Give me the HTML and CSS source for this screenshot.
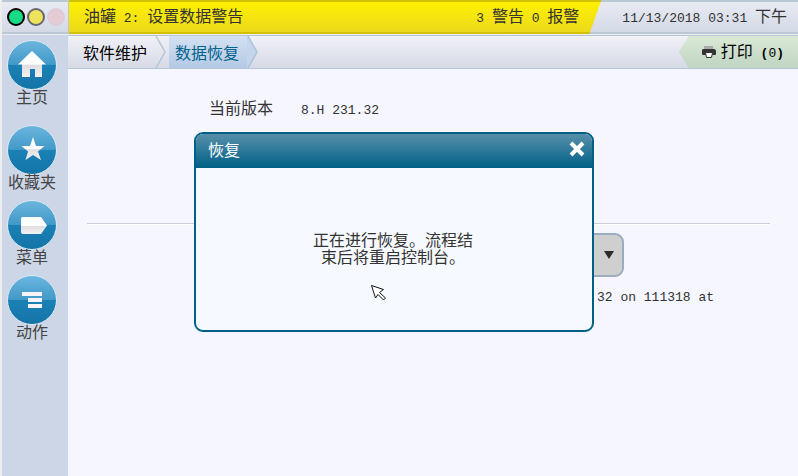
FILE: index.html
```
<!DOCTYPE html>
<html lang="zh-CN">

<head>
  <meta charset="utf-8">
  <title>数据恢复</title>
  <link rel="stylesheet" href="styles.css">
</head>

<body>
  <header class="topbar">
    <div class="lamps">
      <span class="lamp green"></span>
      <span class="lamp yellow"></span>
      <span class="lamp red"></span>
    </div>
    <div class="alert">
      <span>油罐<span class="num"> 2: </span>设置数据警告</span>
      <span><span class="num">3 </span>警告<span class="num"> 0 </span>报警</span>
    </div>
    <div class="clock"><span><span class="num">11/13/2018 03:31 </span>下午</span></div>
  </header>

  <div class="page">
    <nav class="sidebar">
      <a class="navitem home" href="#">
        <span class="disc">
          <svg width="48" height="48" viewBox="0 0 48 48">
            <defs>
              <linearGradient id="shine" x1="0" y1="0" x2="0" y2="1">
                <stop offset="0" stop-color="#fff" />
                <stop offset="0.5" stop-color="#fff" />
                <stop offset="0.55" stop-color="#e2dfe3" />
                <stop offset="1" stop-color="#f4f1f4" />
              </linearGradient>
            </defs>
            <path fill="url(#shine)" d="M24 10L38 23.500H34V36H27V28H22V36H14V23.500H10Z" />
          </svg>
        </span>
        主页
      </a>
      <a class="navitem" href="#">
        <span class="disc">
          <svg width="48" height="48" viewBox="0 0 48 48">
            <path fill="url(#shine)" d="M25 11L28 20H36.500L30 25.500L33 34L25 29L17.500 34L20 25.500L13.500 20H22Z" />
          </svg>
        </span>
        收藏夹
      </a>
      <a class="navitem" href="#">
        <span class="disc">
          <svg width="48" height="48" viewBox="0 0 48 48">
            <path fill="url(#shine)" d="M15 16H33L39 24.500L33 33H15Q13 33 13 31V18Q13 16 15 16Z" />
          </svg>
        </span>
        菜单
      </a>
      <a class="navitem" href="#">
        <span class="disc">
          <svg width="48" height="48" viewBox="0 0 48 48">
            <path fill="#f6f4f7" d="M14 16H34V20H14ZM20 22H34V26H20ZM20 28H34V32H20Z" />
          </svg>
        </span>
        动作
      </a>
    </nav>

    <div class="content">
      <div class="crumbs">
        <a class="crumb" href="#">软件维护</a>
        <svg class="chevron" width="14" height="32" viewBox="0 0 14 32">
          <path fill="none" stroke="#b5c6d6" stroke-width="1.500" d="M1 0L10 16L1 32" />
        </svg>
        <a class="crumb current" href="#">数据恢复</a>
        <svg class="chevron" width="12" height="32" viewBox="0 0 12 32">
          <path fill="#c4d5ec" d="M0 0H1L10 16L1 32H0Z" />
          <path fill="none" stroke="#a9c4da" stroke-width="1.500" d="M1 0L10 16L1 32" />
        </svg>
        <button class="print" type="button">
          <svg width="16" height="14" viewBox="0 0 16 14">
            <path fill="#aaa" d="M3 1H12V5H3Z" />
            <path fill="#333" d="M2 4H13Q15 4 15 6V9Q15 10 14 10H2Q1 10 1 9V6Q1 4 2 4Z" />
            <path fill="#fff" stroke="#333" d="M4.500 7.500H11.500L10.500 12.500H5.500Z" />
          </svg>
          <span>打印<span class="num bold"> (</span><span class="num">0</span><span class="num bold">)</span></span>
        </button>
      </div>

      <main class="main">
        <div class="version">
          <span>当前版本</span>
          <span class="num">8.H 231.32</span>
        </div>
        <hr class="rule">
        <div class="picker">
          <select class="select" aria-label="数据恢复">
            <option></option>
          </select>
          <svg class="arrow" width="10" height="8" viewBox="0 0 10 8">
            <path fill="#2b2b2b" d="M0 0H10L5 8Z" />
          </svg>
        </div>
        <p class="detail num">32 on 111318 at</p>
      </main>
    </div>
  </div>

  <div class="dialog" role="dialog" aria-labelledby="dialog-title">
    <div class="dialog-head">
      <span id="dialog-title">恢复</span>
      <button class="close" type="button" aria-label="关闭">
        <svg width="16" height="16" viewBox="0 0 16 16">
          <path stroke="#fff" stroke-width="4" d="M2 2L14 14M14 2L2 14" />
        </svg>
      </button>
    </div>
    <p class="dialog-text">正在进行恢复。流程结束后将重启控制台。</p>
  </div>

  <svg class="pointer" width="16" height="16" viewBox="0 0 16 16">
    <path fill="#fff" stroke="#111" d="M0.500 0.500L12.500 4.500L8.500 7.500L14.500 13L12.500 15L7 9.500L4.500 13Z" />
  </svg>
</body>

</html>
```

FILE: styles.css
```
* {
  box-sizing: border-box;
}

body {
  margin: 0;
  min-height: 100vh;
  display: flex;
  flex-direction: column;
  padding-left: 2px;
  background: #eee;
  color: #333;
  font-family: "Noto Sans CJK SC", sans-serif;
  font-size: 16px;
  font-weight: 400;
  line-height: 16px;
}

a {
  color: inherit;
  text-decoration: none;
}

button {
  border: 0;
  padding: 0;
  background: none;
  color: inherit;
  font: inherit;
}

svg {
  display: block;
  flex: none;
}

/* latin and digits are half the width of a chinese character */
.num {
  font-family: "Liberation Mono", monospace;
  font-size: 13px;
  font-weight: 400;
  white-space: pre;
}

.bold {
  font-weight: 700;
}

/* top bar */
.topbar {
  display: flex;
  height: 34px;
  background: linear-gradient(#e9ebf3, #d3d9e6);
  border-top: 2px solid #bac7d5;
  border-bottom: 2px solid #bac7d5;
}

.lamps {
  width: 67px;
  display: flex;
  align-items: center;
  gap: 2px;
  padding-left: 5px;
  border-right: 1px solid #bac7d5;
}

.lamp {
  width: 18px;
  height: 18px;
  border: 2px solid #000;
  border-radius: 50%;
}

.green {
  background: #18dc85;
}

.yellow {
  background: #ede35c;
  border-color: #68686c;
}

.red {
  background: #e4cbd4;
  border-color: #dcccd6;
}

.alert {
  flex: 1;
  display: flex;
  align-items: center;
  justify-content: space-between;
  margin: -2px 0;
  padding: 0 22px 0 15px;
  background: linear-gradient(#fff000, #ecd91d);
  border-top: 2px solid #d3c203;
  border-bottom: 2px solid #d3c203;
  clip-path: polygon(0 0, 100% 0, calc(100% - 12px) 100%, 0 100%);
}

.clock {
  display: flex;
  align-items: center;
  padding: 0 11px 0 21px;
}

/* sidebar */
.page {
  flex: 1;
  display: flex;
  padding-top: 1px;
}

.sidebar {
  width: 66px;
  padding: 5px 0;
  background: #ccd6e6;
}

.navitem {
  display: flex;
  flex-direction: column;
  align-items: center;
  margin-bottom: 11px;
  padding-right: 6px;
  color: #444;
}

.home {
  margin-bottom: 21px;
}

.disc {
  width: 50px;
  height: 50px;
  margin-bottom: -2px;
  border: 1px solid #dbe9f3;
  border-radius: 50%;
  background: linear-gradient(#6bb6df, #4198c7 50%, #1b81b5 50%, #1474a8);
}

/* breadcrumbs */
.content {
  flex: 1;
  background: #f5f6ff;
}

.crumbs {
  display: flex;
  height: 34px;
  background: linear-gradient(#f1f1f7, #d6dae6);
  border-top: 1px solid #b5c6d6;
  border-bottom: 1px solid #b5c6d6;
}

.crumb {
  display: flex;
  align-items: center;
  padding: 0 8px 1px 15px;
  color: #000;
}

.current {
  padding: 0 8px 1px 6px;
  background: linear-gradient(#d3e0f1, #b4c9e6);
  color: #00628c;
}

.print {
  display: flex;
  align-items: center;
  gap: 4px;
  margin-left: auto;
  padding: 0 14px 0 22px;
  background: linear-gradient(#dae9d6, #bfd5c2);
  color: #000;
  clip-path: polygon(10px 0, 100% 0, 100% 100%, 10px 100%, 0 50%);
}

/* main area */
.main {
  padding: 30px 28px 0 19px;
}

.version {
  display: flex;
  align-items: baseline;
  gap: 28px;
  padding-left: 122px;
}

.rule {
  margin: 104px 0 8px;
  border: 0;
  border-top: 1px solid #cccddd;
  border-bottom: 1px solid #fff;
}

.picker {
  position: relative;
  width: 324px;
  margin-left: 213px;
}

.select {
  display: block;
  appearance: none;
  width: 100%;
  height: 44px;
  border: 2px solid #9aacbf;
  border-radius: 9px;
  background: #cfcfcf;
}

.arrow {
  position: absolute;
  right: 10px;
  top: 18px;
  pointer-events: none;
}

.detail {
  margin: 13px 0 0 510px;
}

/* dialog */
.dialog {
  position: absolute;
  left: 194px;
  top: 132px;
  width: 400px;
  height: 200px;
  overflow: hidden;
  border: 2px solid #005f87;
  border-radius: 9px;
  background: #f6f9ff;
}

.dialog-head {
  display: flex;
  align-items: center;
  justify-content: space-between;
  height: 34px;
  padding: 0 7px 4px 12px;
  background: linear-gradient(#5790aa, #005f87);
  color: #fff;
}

.dialog-text {
  width: 164px;
  margin: 63px auto 0 115px;
  text-align: center;
  line-height: 17px;
}

.pointer {
  position: absolute;
  left: 371px;
  top: 285px;
}
```
